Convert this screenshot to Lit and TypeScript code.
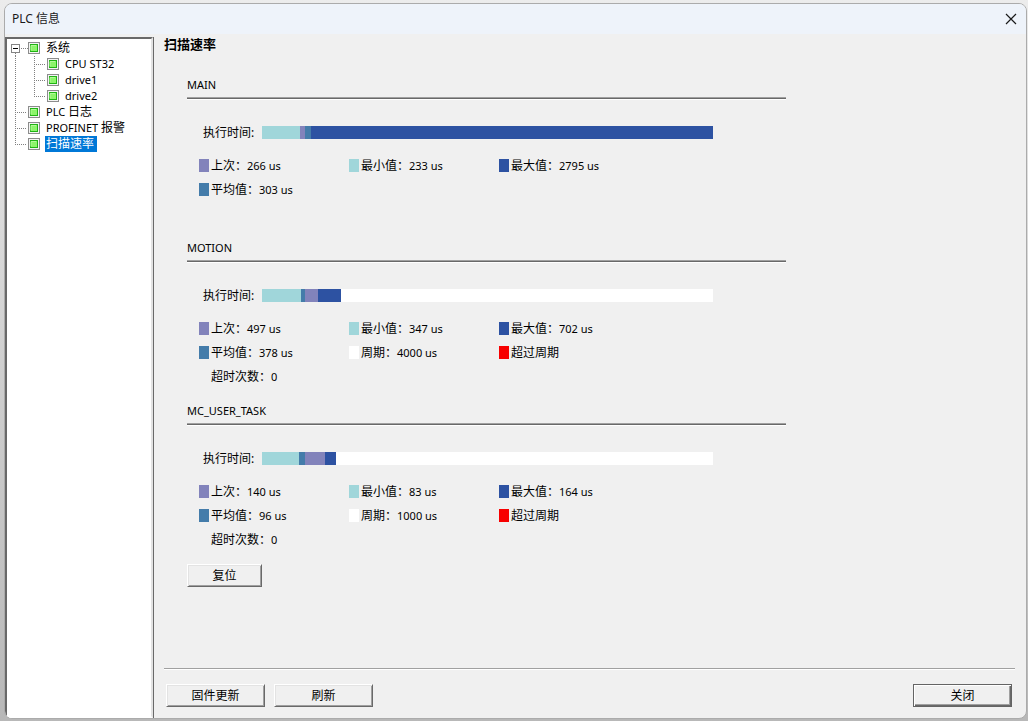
import { LitElement, html, css, svg, nothing } from "lit";
import { customElement, property, state } from "lit/decorators.js";
import { classMap } from "lit/directives/class-map.js";

type Kind = "min" | "avg" | "last" | "max" | "cycle" | "over";

interface Task {
  name: string;
  last: number;
  min: number;
  max: number;
  avg: number;
  cycle?: number;
  overruns?: number;
}

interface Node {
  cjk?: string;
  latin?: string;
  guides: Guide[];
}

type Guide = "root" | "tee" | "end" | "pipe";

const TASKS: Task[] = [
  { name: "MAIN", last: 266, min: 233, max: 2795, avg: 303 },
  { name: "MOTION", last: 497, min: 347, max: 702, avg: 378, cycle: 4000, overruns: 0 },
  { name: "MC_USER_TASK", last: 140, min: 83, max: 164, avg: 96, cycle: 1000, overruns: 0 },
];

const NODES: Node[] = [
  { cjk: "系统", guides: ["root"] },
  { latin: "CPU ST32", guides: ["pipe", "tee"] },
  { latin: "drive1", guides: ["pipe", "tee"] },
  { latin: "drive2", guides: ["pipe", "end"] },
  { latin: "PLC ", cjk: "日志", guides: ["tee"] },
  { latin: "PROFINET ", cjk: "报警", guides: ["tee"] },
  { cjk: "扫描速率", guides: ["end"] },
];

const buttonStyles = css`
  .push {
    box-sizing: border-box;
    height: 23px;
    padding: 1px 8px 0;
    border: 1px solid;
    border-color: #fff #696969 #696969 #fff;
    box-shadow: inset 1px 1px #e3e3e3, inset -1px -1px #a0a0a0;
    border-radius: 0;
    background: #f0f0f0;
    color: #000;
    font: inherit;
    line-height: 20px;
  }
`;

@customElement("plc-tree")
class PlcTree extends LitElement {
  @state() selected = 6;

  static styles = css`
    :host {
      display: block;
      box-sizing: border-box;
      padding: 1px 2px;
      background: #fff;
      border: 2px solid;
      border-color: #696969 #e3e3e3 #fff #696969;
    }
    .tree {
      list-style: none;
      margin: 0;
      padding: 0;
    }
    .row {
      display: flex;
      align-items: center;
      height: 16px;
    }
    .guide,
    .lamp {
      display: block;
      flex: none;
    }
    .label {
      height: 16px;
      margin-left: 4px;
      padding: 0 3px 0 1px;
      border: 0;
      background: none;
      color: #000;
      font: inherit;
      line-height: 16px;
      white-space: pre;
    }
    .label.selected {
      background: #0078d7;
      color: #fff;
    }
    .latin {
      font-size: 11px;
    }
  `;

  guide(kind: Guide) {
    return html`<svg class="guide" width="19" height="16" viewBox="0 0 19 16" aria-hidden="true">
      ${kind === "root"
        ? svg`<path d="M6.5 13V16M12 8.5H19" stroke="#808080" stroke-dasharray="1 1" fill="none"/>
            <rect x="2.5" y="4.5" width="8" height="8" fill="#fff" stroke="#848484"/>
            <path d="M4 8.5H9" stroke="#000"/>`
        : svg`<path d=${kind === "end" ? "M6.5 0V9" : "M6.5 0V16"} stroke="#808080" stroke-dasharray="1 1" fill="none"/>
            ${kind === "pipe" ? nothing : svg`<path d="M8 8.5H18" stroke="#808080" stroke-dasharray="1 1" fill="none"/>`}`}
    </svg>`;
  }

  lamp() {
    return html`<svg class="lamp" width="13" height="12" viewBox="0 0 13 12" aria-hidden="true">
      <rect x="0.5" y="0.5" width="11" height="11" fill="#f4f4f4" stroke="#8c8c8c"/>
      <rect x="2.5" y="2.5" width="7" height="7" fill="#8cf56a" stroke="#20b414"/>
      <path d="M3 8.5V3.5H8" stroke="#b4f99c" fill="none"/>
    </svg>`;
  }

  render() {
    return html`<ul class="tree" role="tree">
      ${NODES.map(
        (n, i) => html`<li class="row" role="treeitem" aria-selected=${i === this.selected}>
          ${n.guides.map((g) => this.guide(g))}${this.lamp()}
          <button
            type="button"
            class=${classMap({ label: true, selected: i === this.selected })}
            @click=${() => (this.selected = i)}
          >${n.latin ? html`<span class="latin">${n.latin}</span>` : nothing}${n.cjk ?? nothing}</button>
        </li>`
      )}
    </ul>`;
  }
}

@customElement("plc-task")
class PlcTask extends LitElement {
  @property({ attribute: false }) task!: Task;

  static styles = css`
    :host {
      display: block;
      height: 163px;
    }
    .name {
      margin: 0;
      font-size: 11px;
      font-weight: 400;
      line-height: 20px;
    }
    .rule {
      height: 1px;
      margin: 2px 0 0;
      border: solid;
      border-width: 1px 0;
      border-color: #a0a0a0 transparent #fff;
      background: #696969;
    }
    .time {
      display: flex;
      align-items: flex-start;
      height: 20px;
      margin: 23px 73px 0 16px;
    }
    .caption {
      flex: none;
      width: 59px;
      line-height: 20px;
    }
    .bar {
      display: flex;
      flex: 1;
      height: 13px;
      margin-top: 3px;
    }
    .values {
      display: grid;
      grid-template-columns: repeat(3, 150px);
      grid-auto-rows: 24px;
      margin: 11px 0 0 12px;
    }
    .value {
      display: flex;
      align-items: flex-start;
      gap: 2px;
      line-height: 24px;
      white-space: pre;
    }
    .swatch {
      flex: none;
      width: 10px;
      height: 13px;
      margin-top: 5px;
    }
    .number {
      font-size: 11px;
    }
    .min { background: #a0d6da; }
    .avg { background: #447caa; }
    .last { background: #8283bb; }
    .max { background: #2d52a2; }
    .cycle { background: #fff; }
    .over { background: #f70000; }
  `;

  bar() {
    const t = this.task;
    const total = t.cycle ?? t.max;
    const marks: [Kind, number][] = [
      ["min", t.min],
      ["avg", t.avg],
      ["last", t.last],
      ["max", t.max],
    ];
    marks.sort((a, b) => a[1] - b[1]);
    if (t.cycle) marks.push(["cycle", t.cycle]);
    return marks.map(([kind, at], i) => {
      const from = i ? marks[i - 1][1] : 0;
      return html`<span class=${kind} style="width:${((at - from) / total) * 100}%"></span>`;
    });
  }

  value(kind: Kind | "", label: string, text = "") {
    return html`<div class="value">
      <span class="swatch ${kind}"></span><span>${label}<span class="number">${text}</span></span>
    </div>`;
  }

  render() {
    const t = this.task;
    return html`
      <h2 class="name">${t.name}</h2>
      <div class="rule"></div>
      <div class="time"><span class="caption">执行时间:</span><div class="bar">${this.bar()}</div></div>
      <div class="values">
        ${this.value("last", "上次：", `${t.last} us`)}
        ${this.value("min", "最小值：", `${t.min} us`)}
        ${this.value("max", "最大值：", `${t.max} us`)}
        ${this.value("avg", "平均值：", `${t.avg} us`)}
        ${t.cycle
          ? html`${this.value("cycle", "周期：", `${t.cycle} us`)}
            ${this.value("over", "超过周期")}
            ${this.value("", "超时次数：", `${t.overruns}`)}`
          : nothing}
      </div>
    `;
  }
}

@customElement("app-root")
class AppRoot extends LitElement {
  static styles = [
    buttonStyles,
    css`
      :host {
        display: flex;
        box-sizing: border-box;
        min-height: 100vh;
        padding: 3px 1px 2px 4px;
        background: linear-gradient(#ececec, #d0d0d0 50%, #b8b8b8);
        color: #000;
        font: 12px/16px "Noto Sans", "Noto Sans CJK SC", sans-serif;
      }
      .window {
        display: flex;
        flex: 1;
        flex-direction: column;
        overflow: hidden;
        border: 1px solid #ababab;
        border-radius: 8px;
        background: #f0f0f0;
      }
      .titlebar {
        display: flex;
        align-items: center;
        justify-content: space-between;
        height: 30px;
        padding: 0 7px;
        background: #eef3fa;
      }
      .title {
        color: #1a1a1a;
      }
      .close {
        display: block;
        padding: 2px;
        border: 0;
        background: none;
      }
      .close svg {
        display: block;
      }
      .body {
        display: flex;
        flex: 1;
      }
      .tree {
        flex: none;
        width: 148px;
        margin-top: 3px;
      }
      .main {
        display: flex;
        flex: 1;
        flex-direction: column;
        margin-top: 3px;
        padding: 0 11px 11px 10px;
        border-left: 1px solid #696969;
      }
      .heading {
        margin: 0;
        font-size: 13px;
        font-weight: 700;
        line-height: 14px;
      }
      .tasks {
        flex: 1;
        max-width: 599px;
        padding: 24px 0 0 23px;
      }
      .reset {
        width: 75px;
      }
      .footer {
        display: flex;
        gap: 9px;
        padding: 15px 3px 0 2px;
        border-top: 1px solid #a0a0a0;
        box-shadow: inset 0 1px #fff;
      }
      .action {
        width: 99px;
      }
      .default {
        margin-left: auto;
        border-color: #646464;
        box-shadow: inset 1px 1px #fff, inset -1px -1px #696969, inset -2px -2px #a0a0a0;
      }
    `,
  ];

  render() {
    return html`
      <div class="window">
        <header class="titlebar">
          <span class="title">PLC 信息</span>
          <button class="close" type="button" aria-label="关闭">
            <svg width="12" height="12" viewBox="0 0 12 12">
              <path d="M1 1L11 11M11 1L1 11" stroke="#1a1a1a" stroke-width="1.2" fill="none" />
            </svg>
          </button>
        </header>
        <div class="body">
          <plc-tree class="tree"></plc-tree>
          <main class="main">
            <h1 class="heading">扫描速率</h1>
            <div class="tasks">
              ${TASKS.map((t) => html`<plc-task .task=${t}></plc-task>`)}
              <button class="push reset" type="button">复位</button>
            </div>
            <footer class="footer">
              <button class="push action" type="button">固件更新</button>
              <button class="push action" type="button">刷新</button>
              <button class="push action default" type="button">关闭</button>
            </footer>
          </main>
        </div>
      </div>
    `;
  }
}
